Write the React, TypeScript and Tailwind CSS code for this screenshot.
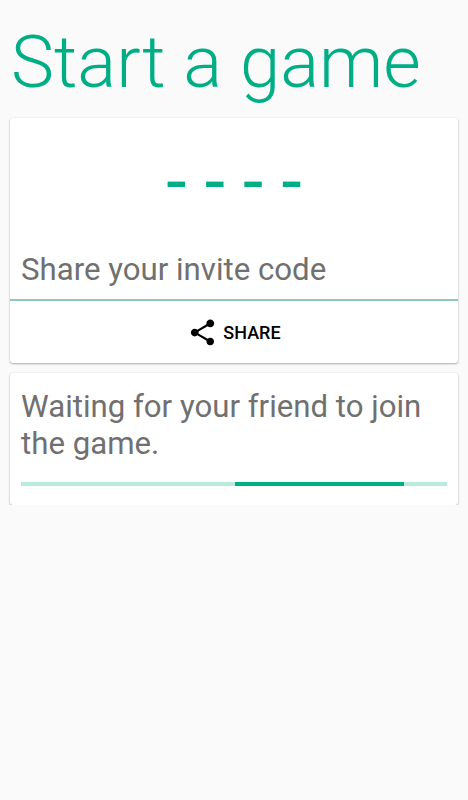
import { MdShare } from 'react-icons/md';

const CARD = 'rounded-[3px] bg-white shadow-[0_1px_2px_rgba(0,0,0,0.3),0_0_2px_rgba(0,0,0,0.08)]';

export default function App() {
  return (
    <main className="h-[800px] w-[468px] overflow-hidden bg-[#fafafa] px-2.5 font-[Roboto,sans-serif]">
      <h1 className="h-[118px] pt-[19px] pl-px text-[72.5px] leading-[87px] font-light whitespace-nowrap text-[#00ae86]">
        Start a game
      </h1>

      <section className={CARD}>
        <div className="flex h-[132px] items-center justify-center pb-1 text-[73px] text-[#00ae86]">
          <span className="mr-[-18.2px] tracking-[18.2px]">----</span>
        </div>
        <p className="h-[49px] pt-px pl-[11px] text-[31.2px] leading-[38px] text-[#707070]">
          Share your invite code
        </p>
        <div className="h-[2px] bg-[#8acab7]" />
        <button className="flex h-[62px] w-full items-center justify-center gap-[5px] text-[18px] font-medium text-black">
          <MdShare size={31} />
          SHARE
        </button>
      </section>

      {/* the scroll area ends right at the bottom edge of this card */}
      <div className="-mx-2.5 mt-[5px] overflow-hidden px-2.5 pt-[5px]">
        <section className={`h-[132px] px-[11px] pt-[15px] ${CARD}`}>
          <p className="text-[31.2px] leading-[37px] text-[#707070]">
            Waiting for your friend to join the game.
          </p>
          <div className="mt-5 flex h-1 bg-[#b9eade]">
            <div className="ml-[214px] w-[169px] bg-[#00ae86]" />
          </div>
        </section>
      </div>
    </main>
  );
}
